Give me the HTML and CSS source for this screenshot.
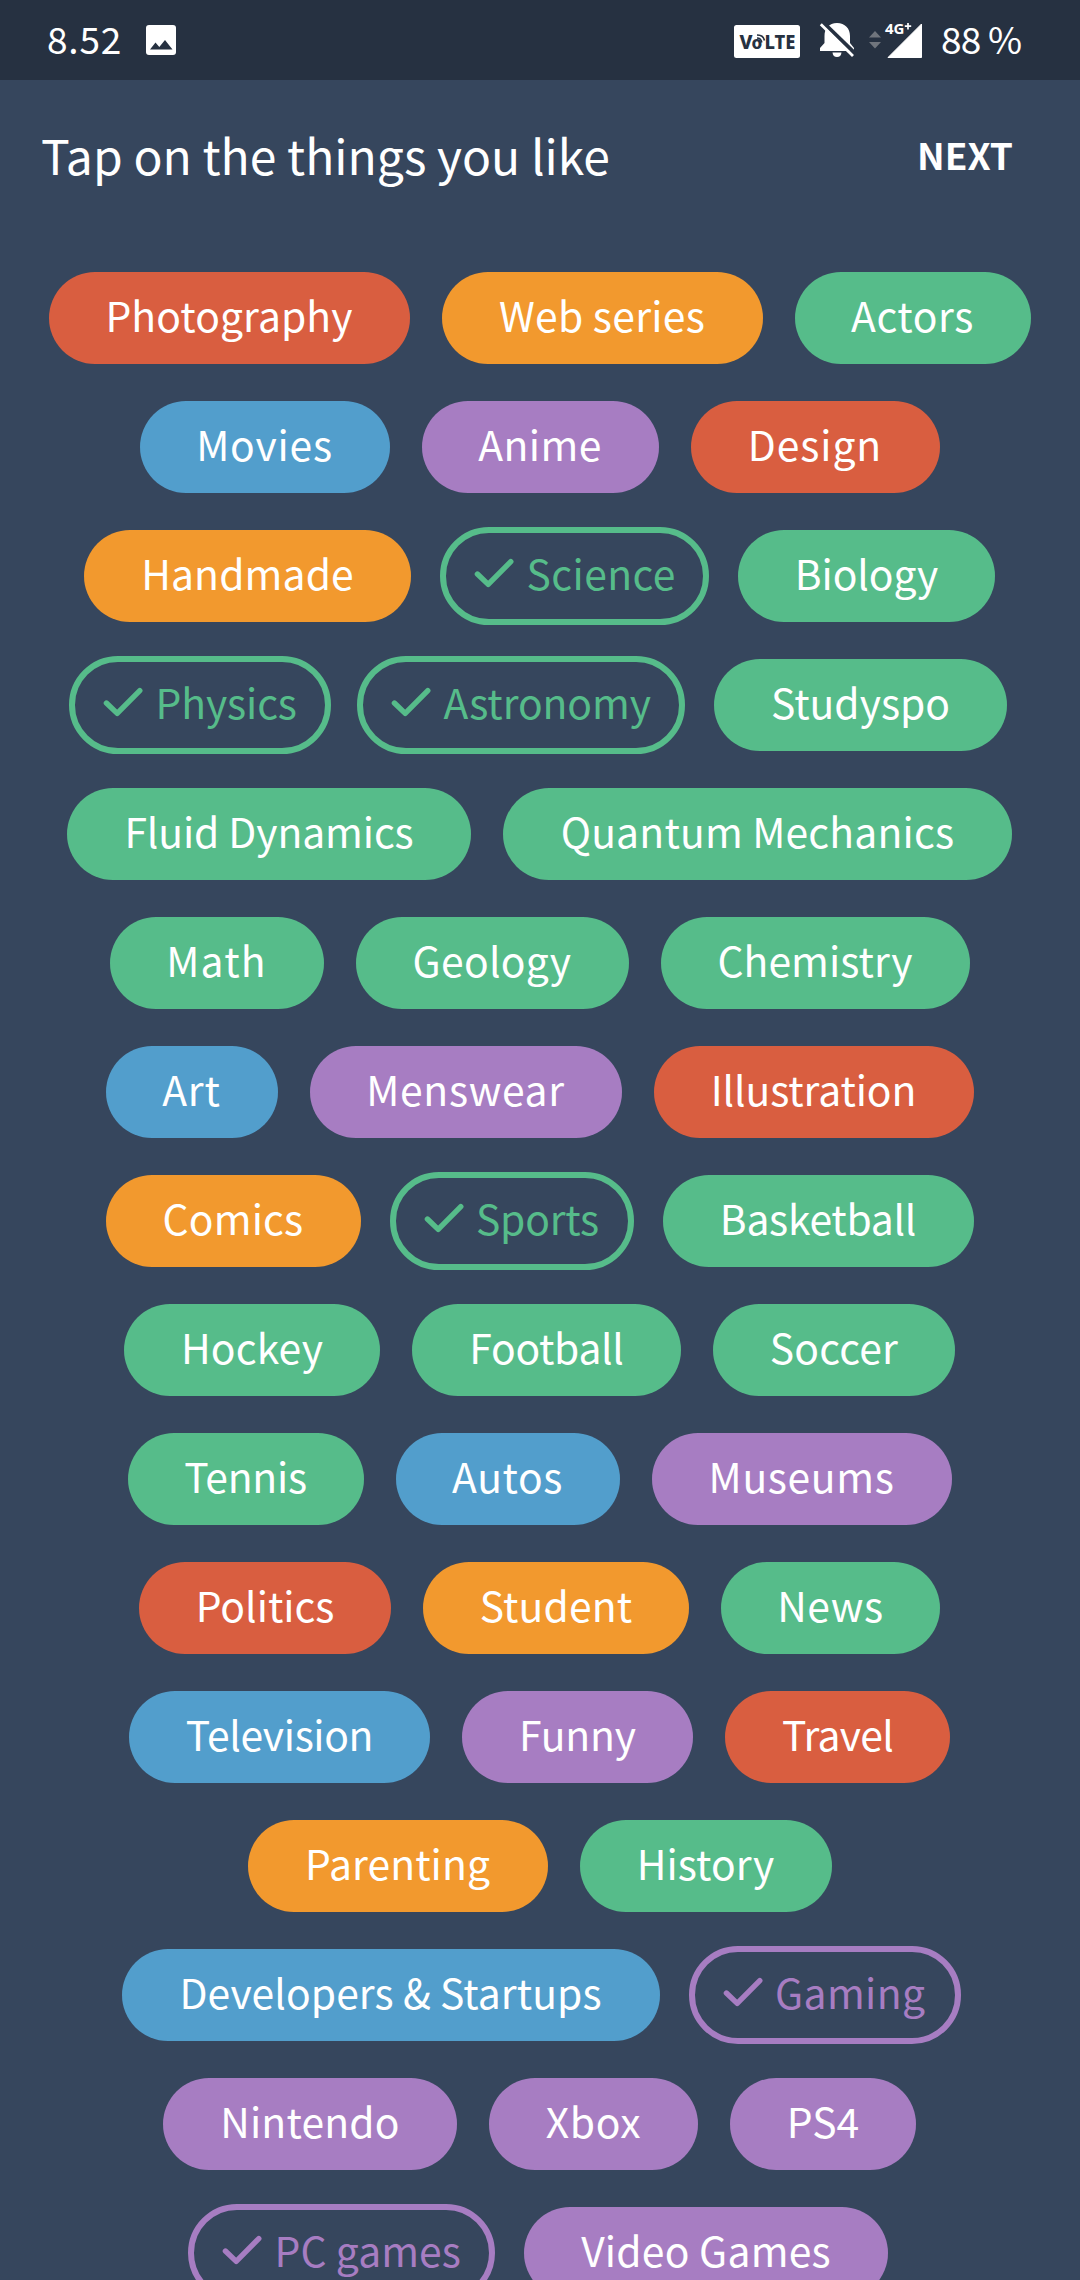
FILE: index.html
```html
<!DOCTYPE html>
<html lang="en">
<head>
<meta charset="utf-8">
<title>Interests</title>
<link rel="stylesheet" href="styles.css">
</head>
<body>
<svg width="0" height="0" class="defs"><symbol id="check" viewBox="0 0 40 30"><path d="M3.400 16 L14.200 26.400 L36.800 3.600" fill="none" stroke="currentColor" stroke-width="5.400" stroke-linecap="round" stroke-linejoin="round"/></symbol></svg>
<header class="status">
  <span class="clock">8.52</span>
  <svg class="photo" width="30" height="30" viewBox="0 0 30 30"><rect width="30" height="30" rx="3" fill="#fff"/><path d="M4 24.500 L9.500 17.500 L13.300 22 L19 15 L26.500 24.500Z" fill="#263141"/></svg>
  <svg class="sysicons" width="190" height="40" viewBox="0 0 190 40">
    <rect x="1" y="5" width="66" height="33" rx="2.500" fill="#fff"/>
    <g class="volte"><text x="6.500" y="29" textLength="13" lengthAdjust="spacingAndGlyphs">V</text><text class="volte-o" x="18.500" y="29">o</text><text x="31.500" y="29" textLength="31" lengthAdjust="spacingAndGlyphs">LTE</text></g>
    <path d="M24 18 Q28 18 28.800 22.500 M24 15 Q30.500 15 31.500 20.500" fill="none" stroke="#263141" stroke-width="1.700"/>
    <path d="M104 3 C96 3 91.500 8.500 91.500 16 V23 L87 28 V31 H121 V28 L117 23 V16 C117 8.500 112 3 104 3Z M99.500 32.500 H108.500 Q108 37 104 37 Q100 37 99.500 32.500Z" fill="#fff"/>
    <path d="M89.500 2 L122 33.500" stroke="#263141" stroke-width="4"/>
    <path d="M87.800 4.200 L120 36" stroke="#fff" stroke-width="2.800"/>
    <path d="M136 17.500 L142 11 L148 17.500Z M136 22 L142 28.500 L148 22Z" fill="#70757d"/>
    <path d="M188.500 4 V37.500 H155 Z" fill="#fff" stroke="#fff" stroke-linejoin="round"/>
    <text class="net" x="152" y="14" textLength="19.500" lengthAdjust="spacingAndGlyphs">4G</text>
    <path d="M175 3 V9.500 M171.800 6.200 H178.200" stroke="#fff" stroke-width="1.700"/>
  </svg>
  <span class="battery">88 %</span>
</header>
<div class="titlebar"><h1 class="title">Tap on the things you like</h1><button class="next">NEXT</button></div>
<main class="chips">
  <div class="row"><span class="chip red" style="--w:361px;--ls:.1px">Photography</span><span class="chip orange" style="--w:321px;--ls:.3px">Web series</span><span class="chip green" style="--w:236px;--ls:.6px">Actors</span></div>
  <div class="row"><span class="chip blue" style="--w:250px;--ls:.8px">Movies</span><span class="chip purple" style="--w:237px;--ls:.4px">Anime</span><span class="chip red" style="--w:249px;--ls:.9px">Design</span></div>
  <div class="row"><span class="chip orange" style="--w:327px;--ls:.15px">Handmade</span><span class="chip green on" style="--w:263px;--ls:.45px"><svg class="tick"><use href="#check"/></svg>Science</span><span class="chip green" style="--w:257px;--ls:-.1px">Biology</span></div>
  <div class="row"><span class="chip green on" style="--w:256px;--ls:-.1px"><svg class="tick"><use href="#check"/></svg>Physics</span><span class="chip green on" style="--w:322px;--ls:-.1px"><svg class="tick"><use href="#check"/></svg>Astronomy</span><span class="chip green" style="--w:293px;--ls:0px">Studyspo</span></div>
  <div class="row"><span class="chip green" style="--w:404px;--ls:-.1px">Fluid Dynamics</span><span class="chip green" style="--w:509px;--ls:.2px">Quantum Mechanics</span></div>
  <div class="row"><span class="chip green" style="--w:214px;--ls:1.2px">Math</span><span class="chip green" style="--w:273px;--ls:.3px">Geology</span><span class="chip green" style="--w:309px;--ls:.1px">Chemistry</span></div>
  <div class="row"><span class="chip blue" style="--w:172px;--ls:.9px">Art</span><span class="chip purple" style="--w:312px;--ls:.7px">Menswear</span><span class="chip red" style="--w:320px;--ls:-.1px">Illustration</span></div>
  <div class="row"><span class="chip orange" style="--w:255px;--ls:.2px">Comics</span><span class="chip green on" style="--w:238px;--ls:-.2px"><svg class="tick"><use href="#check"/></svg>Sports</span><span class="chip green" style="--w:311px;--ls:-.25px">Basketball</span></div>
  <div class="row"><span class="chip green" style="--w:256px;--ls:.2px">Hockey</span><span class="chip green" style="--w:269px;--ls:-.3px">Football</span><span class="chip green" style="--w:242px;--ls:.2px">Soccer</span></div>
  <div class="row"><span class="chip green" style="--w:236px;--ls:-.25px">Tennis</span><span class="chip blue" style="--w:224px;--ls:.6px">Autos</span><span class="chip purple" style="--w:300px;--ls:.65px">Museums</span></div>
  <div class="row"><span class="chip red" style="--w:252px;--ls:0px">Politics</span><span class="chip orange" style="--w:266px;--ls:.15px">Student</span><span class="chip green" style="--w:219px;--ls:.6px">News</span></div>
  <div class="row"><span class="chip blue" style="--w:301px;--ls:-.35px">Television</span><span class="chip purple" style="--w:231px;--ls:-.1px">Funny</span><span class="chip red" style="--w:225px;--ls:-.7px">Travel</span></div>
  <div class="row"><span class="chip orange" style="--w:300px;--ls:.1px">Parenting</span><span class="chip green" style="--w:252px;--ls:.1px">History</span></div>
  <div class="row"><span class="chip blue" style="--w:538px;--ls:.08px">Developers &amp; Startups</span><span class="chip purple on" style="--w:266px;--ls:.4px"><svg class="tick"><use href="#check"/></svg>Gaming</span></div>
  <div class="row"><span class="chip purple" style="--w:294px;--ls:.2px">Nintendo</span><span class="chip purple" style="--w:209px;--ls:.7px">Xbox</span><span class="chip purple" style="--w:186px;--ls:.1px">PS4</span></div>
  <div class="row"><span class="chip purple on" style="--w:301px;--ls:.1px"><svg class="tick"><use href="#check"/></svg>PC games</span><span class="chip purple" style="--w:364px;--ls:.25px">Video Games</span></div>
</main>
</body>
</html>
```
FILE: styles.css
```css
* { box-sizing: border-box; }
body {
  margin: 0;
  width: 1080px;
  height: 2280px;
  overflow: hidden;
  background: #36465d;
  color: #fff;
  font-family: "Noto Sans CJK SC", "Noto Sans", sans-serif;
}
.defs { display: block; }
.status {
  display: flex;
  align-items: center;
  height: 80px;
  padding-left: 47px;
  background: #263141;
  font-size: 37px;
  line-height: 76px;
}
.clock { width: 99px; height: 80px; letter-spacing: 0.8px; }
.sysicons { margin-left: 557px; overflow: visible; }
.battery { height: 80px; margin-left: 18px; white-space: nowrap; letter-spacing: -0.8px; }
.volte { font: 800 19px "Noto Sans", sans-serif; fill: #263141; }
.volte-o { font-size: 17px; }
.net { font: 700 15px "Noto Sans", sans-serif; fill: #fff; }
.titlebar {
  display: flex;
  align-items: center;
  justify-content: space-between;
  height: 192px;
  padding: 0 67px 44px 41px;
}
.title { margin: 0; font-size: 48px; font-weight: 400; }
.next { border: 0; padding: 0; background: none; color: #fff; font: 700 37px "Noto Sans CJK SC", sans-serif; }
.chips { display: flex; flex-direction: column; gap: 37px; padding-right: 1px; }
.row { display: flex; justify-content: center; gap: 32px; height: 92px; }
.chip {
  flex: none;
  width: var(--w);
  height: 92px;
  border-radius: 46px;
  font-size: 40.8px;
  line-height: 86px;
  letter-spacing: var(--ls);
  text-align: center;
  white-space: nowrap;
  background: var(--tone);
}
.red { --tone: #d95e40; }
.orange { --tone: #f2992e; }
.green { --tone: #56bc8a; }
.blue { --tone: #529ecc; }
.purple { --tone: #a77dc2; }
.on {
  display: flex;
  width: calc(var(--w) + 6px);
  height: 98px;
  margin: -3px;
  padding-left: 28px;
  border: 6px solid var(--tone);
  border-radius: 49px;
  background: none;
  color: var(--tone);
  line-height: 80px;
}
.tick { flex: none; width: 40px; height: 30px; margin: 25px 12.5px 0 0; }
```
